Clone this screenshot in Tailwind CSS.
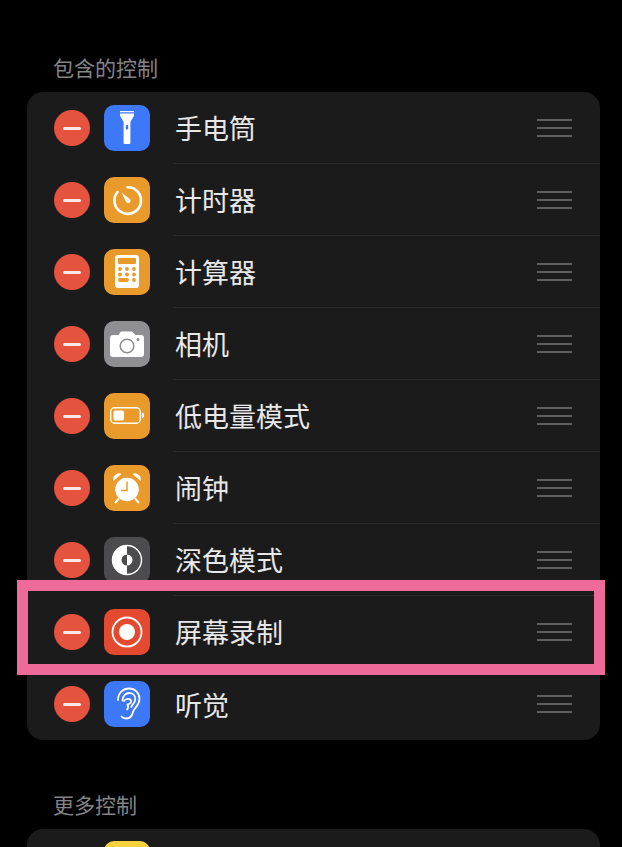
<!DOCTYPE html>
<html lang="zh-CN">
<head>
  <meta charset="UTF-8" />
  <title>控制中心</title>
  <script src="https://cdn.jsdelivr.net/npm/@tailwindcss/browser@4"></script>
</head>
<body class="bg-black h-[847px] overflow-hidden font-['Noto_Sans_CJK_SC',sans-serif]">
<div class="relative h-[847px] overflow-hidden px-[22px] pt-[52px]">

  <!-- 包含的控制 -->
  <h2 class="pl-[31px] h-[40px] text-[21px] leading-[31px] font-normal text-[#848487]">包含的控制</h2>
  <div class="w-[573px] ml-[5px] bg-[#1b1b1c] rounded-[16px] overflow-hidden">

    <div class="flex items-center h-[72px]">
      <div class="ml-[27px] w-[36px] h-[36px] rounded-full bg-[#e5533f] flex items-center justify-center shrink-0"><div class="w-[18px] h-[3px] rounded-full bg-[#fbe9e5]"></div></div>
      <div class="ml-[14px] w-[46px] h-[46px] rounded-[10px] bg-[#3d78f6] shrink-0">
        <svg viewBox="0 0 46 46" class="w-[46px] h-[46px]"><path d="M16 6h14v1.200H16z" fill="#fff"/><path d="M16 8.400h14v2.400l-3.600 6.200V38a1 1 0 0 1-1 1h-4.800a1 1 0 0 1-1-1V17l-3.600-6.200z" fill="#fff"/><rect x="21.800" y="20" width="2.400" height="4.500" rx="1" fill="#3d78f6"/></svg>
      </div>
      <div class="ml-[24px] pl-px flex-1 h-full flex items-center justify-between pr-[28px] border-b border-[#2a2a2b]">
        <span class="text-[27px] leading-none text-[#e8e8e8]">手电筒</span>
        <div class="flex flex-col gap-[6px]"><div class="w-[35px] h-[2px] bg-[#5f5f61]"></div><div class="w-[35px] h-[2px] bg-[#5f5f61]"></div><div class="w-[35px] h-[2px] bg-[#5f5f61]"></div></div>
      </div>
    </div>

    <div class="flex items-center h-[72px]">
      <div class="ml-[27px] w-[36px] h-[36px] rounded-full bg-[#e5533f] flex items-center justify-center shrink-0"><div class="w-[18px] h-[3px] rounded-full bg-[#fbe9e5]"></div></div>
      <div class="ml-[14px] w-[46px] h-[46px] rounded-[10px] bg-[#e99a2b] shrink-0">
        <svg viewBox="0 0 46 46" class="w-[46px] h-[46px]"><path d="M23.500 10.200A13.300 13.300 0 1 1 13.500 15" fill="none" stroke="#fff" stroke-width="2.600" stroke-linecap="round"/><path d="M17.500 15.500l8 6.200a2.400 2.400 0 1 1-3.400 3.200z" fill="#fff"/></svg>
      </div>
      <div class="ml-[24px] pl-px flex-1 h-full flex items-center justify-between pr-[28px] border-b border-[#2a2a2b]">
        <span class="text-[27px] leading-none text-[#e8e8e8]">计时器</span>
        <div class="flex flex-col gap-[6px]"><div class="w-[35px] h-[2px] bg-[#5f5f61]"></div><div class="w-[35px] h-[2px] bg-[#5f5f61]"></div><div class="w-[35px] h-[2px] bg-[#5f5f61]"></div></div>
      </div>
    </div>

    <div class="flex items-center h-[72px]">
      <div class="ml-[27px] w-[36px] h-[36px] rounded-full bg-[#e5533f] flex items-center justify-center shrink-0"><div class="w-[18px] h-[3px] rounded-full bg-[#fbe9e5]"></div></div>
      <div class="ml-[14px] w-[46px] h-[46px] rounded-[10px] bg-[#e99a2b] shrink-0">
        <svg viewBox="0 0 46 46" class="w-[46px] h-[46px]"><rect x="11" y="6" width="24" height="33" rx="3" fill="#fff"/><rect x="14" y="9" width="18" height="6" rx="1" fill="#e99a2b"/><g fill="#e99a2b"><circle cx="16" cy="20" r="1.900"/><circle cx="23" cy="20" r="1.900"/><circle cx="30" cy="20" r="1.900"/><circle cx="16" cy="25.500" r="1.900"/><circle cx="23" cy="25.500" r="1.900"/><circle cx="30" cy="25.500" r="1.900"/><rect x="14.100" y="29.100" width="10.800" height="3.800" rx="1.900"/><circle cx="30" cy="31" r="1.900"/></g></svg>
      </div>
      <div class="ml-[24px] pl-px flex-1 h-full flex items-center justify-between pr-[28px] border-b border-[#2a2a2b]">
        <span class="text-[27px] leading-none text-[#e8e8e8]">计算器</span>
        <div class="flex flex-col gap-[6px]"><div class="w-[35px] h-[2px] bg-[#5f5f61]"></div><div class="w-[35px] h-[2px] bg-[#5f5f61]"></div><div class="w-[35px] h-[2px] bg-[#5f5f61]"></div></div>
      </div>
    </div>

    <div class="flex items-center h-[72px]">
      <div class="ml-[27px] w-[36px] h-[36px] rounded-full bg-[#e5533f] flex items-center justify-center shrink-0"><div class="w-[18px] h-[3px] rounded-full bg-[#fbe9e5]"></div></div>
      <div class="ml-[14px] w-[46px] h-[46px] rounded-[10px] bg-[#8e8e93] shrink-0">
        <svg viewBox="0 0 46 46" class="w-[46px] h-[46px]"><path d="M9 14h5.500l1.500-2.600a2 2 0 0 1 1.700-1h9.600a2 2 0 0 1 1.700 1L31.500 14H37a3 3 0 0 1 3 3v16a3 3 0 0 1-3 3H9a3 3 0 0 1-3-3V17a3 3 0 0 1 3-3z" fill="#fff"/><circle cx="23" cy="25" r="6.800" fill="none" stroke="#8e8e93" stroke-width="1.500"/><circle cx="34" cy="18.500" r="1.500" fill="#8e8e93"/></svg>
      </div>
      <div class="ml-[24px] pl-px flex-1 h-full flex items-center justify-between pr-[28px] border-b border-[#2a2a2b]">
        <span class="text-[27px] leading-none text-[#e8e8e8]">相机</span>
        <div class="flex flex-col gap-[6px]"><div class="w-[35px] h-[2px] bg-[#5f5f61]"></div><div class="w-[35px] h-[2px] bg-[#5f5f61]"></div><div class="w-[35px] h-[2px] bg-[#5f5f61]"></div></div>
      </div>
    </div>

    <div class="flex items-center h-[72px]">
      <div class="ml-[27px] w-[36px] h-[36px] rounded-full bg-[#e5533f] flex items-center justify-center shrink-0"><div class="w-[18px] h-[3px] rounded-full bg-[#fbe9e5]"></div></div>
      <div class="ml-[14px] w-[46px] h-[46px] rounded-[10px] bg-[#e99a2b] shrink-0">
        <svg viewBox="0 0 46 46" class="w-[46px] h-[46px]"><rect x="6.700" y="14.700" width="29.600" height="15.600" rx="4" fill="none" stroke="#fff" stroke-width="1.400"/><rect x="9.500" y="17.500" width="10.500" height="10" rx="1.800" fill="#fff"/><path d="M38 19.500c1.300.4 2 1.500 2 3s-.7 2.600-2 3z" fill="#fff"/></svg>
      </div>
      <div class="ml-[24px] pl-px flex-1 h-full flex items-center justify-between pr-[28px] border-b border-[#2a2a2b]">
        <span class="text-[27px] leading-none text-[#e8e8e8]">低电量模式</span>
        <div class="flex flex-col gap-[6px]"><div class="w-[35px] h-[2px] bg-[#5f5f61]"></div><div class="w-[35px] h-[2px] bg-[#5f5f61]"></div><div class="w-[35px] h-[2px] bg-[#5f5f61]"></div></div>
      </div>
    </div>

    <div class="flex items-center h-[72px]">
      <div class="ml-[27px] w-[36px] h-[36px] rounded-full bg-[#e5533f] flex items-center justify-center shrink-0"><div class="w-[18px] h-[3px] rounded-full bg-[#fbe9e5]"></div></div>
      <div class="ml-[14px] w-[46px] h-[46px] rounded-[10px] bg-[#e99a2b] shrink-0">
        <svg viewBox="0 0 46 46" class="w-[46px] h-[46px]"><circle cx="23" cy="24.500" r="11.800" fill="#fff"/><path d="M9.500 16a5.800 5.800 0 0 1 8-7z" fill="#fff"/><path d="M36.500 16a5.800 5.800 0 0 0-8-7z" fill="#fff"/><path d="M14.500 34l-3 3.500M31.500 34l3 3.500" stroke="#fff" stroke-width="2" stroke-linecap="round"/><path d="M23 16.500v9h-6" fill="none" stroke="#e99a2b" stroke-width="1.500"/></svg>
      </div>
      <div class="ml-[24px] pl-px flex-1 h-full flex items-center justify-between pr-[28px] border-b border-[#2a2a2b]">
        <span class="text-[27px] leading-none text-[#e8e8e8]">闹钟</span>
        <div class="flex flex-col gap-[6px]"><div class="w-[35px] h-[2px] bg-[#5f5f61]"></div><div class="w-[35px] h-[2px] bg-[#5f5f61]"></div><div class="w-[35px] h-[2px] bg-[#5f5f61]"></div></div>
      </div>
    </div>

    <div class="flex items-center h-[72px]">
      <div class="ml-[27px] w-[36px] h-[36px] rounded-full bg-[#e5533f] flex items-center justify-center shrink-0"><div class="w-[18px] h-[3px] rounded-full bg-[#fbe9e5]"></div></div>
      <div class="ml-[14px] w-[46px] h-[46px] rounded-[10px] bg-[#4c4c4e] shrink-0">
        <svg viewBox="0 0 46 46" class="w-[46px] h-[46px]"><circle cx="23" cy="23" r="14.500" fill="none" stroke="#fff" stroke-width="1.400"/><path d="M23 8.500a14.500 14.500 0 0 0 0 29z" fill="#fff"/><path d="M23 17.500a5.500 5.500 0 0 0 0 11z" fill="#4c4c4e"/><path d="M23 17.500a5.500 5.500 0 0 1 0 11z" fill="#fff"/></svg>
      </div>
      <div class="ml-[24px] pl-px flex-1 h-full flex items-center justify-between pr-[28px] border-b border-[#2a2a2b]">
        <span class="text-[27px] leading-none text-[#e8e8e8]">深色模式</span>
        <div class="flex flex-col gap-[6px]"><div class="w-[35px] h-[2px] bg-[#5f5f61]"></div><div class="w-[35px] h-[2px] bg-[#5f5f61]"></div><div class="w-[35px] h-[2px] bg-[#5f5f61]"></div></div>
      </div>
    </div>

    <div class="flex items-center h-[72px]">
      <div class="ml-[27px] w-[36px] h-[36px] rounded-full bg-[#e5533f] flex items-center justify-center shrink-0"><div class="w-[18px] h-[3px] rounded-full bg-[#fbe9e5]"></div></div>
      <div class="ml-[14px] w-[46px] h-[46px] rounded-[10px] bg-[#e5492f] shrink-0">
        <svg viewBox="0 0 46 46" class="w-[46px] h-[46px]"><circle cx="23" cy="23" r="14.500" fill="none" stroke="#fff" stroke-width="1.800"/><circle cx="23" cy="23" r="8" fill="#fff"/></svg>
      </div>
      <div class="ml-[24px] pl-px flex-1 h-full flex items-center justify-between pr-[28px] border-b border-[#2a2a2b]">
        <span class="text-[27px] leading-none text-[#e8e8e8]">屏幕录制</span>
        <div class="flex flex-col gap-[6px]"><div class="w-[35px] h-[2px] bg-[#5f5f61]"></div><div class="w-[35px] h-[2px] bg-[#5f5f61]"></div><div class="w-[35px] h-[2px] bg-[#5f5f61]"></div></div>
      </div>
    </div>

    <div class="flex items-center h-[72px]">
      <div class="ml-[27px] w-[36px] h-[36px] rounded-full bg-[#e5533f] flex items-center justify-center shrink-0"><div class="w-[18px] h-[3px] rounded-full bg-[#fbe9e5]"></div></div>
      <div class="ml-[14px] w-[46px] h-[46px] rounded-[10px] bg-[#3d78f6] shrink-0">
        <svg viewBox="0 0 46 46" class="w-[46px] h-[46px]"><g fill="none" stroke="#fff" stroke-width="1.800" stroke-linecap="round"><path d="M14 19C14 12 19 7.500 25 7.500c6.500 0 10.500 5 10.500 10.500 0 7-5.500 8.500-6.500 13-.8 4-3.500 6.500-7 6.500-2 0-3.500-.8-4.500-2"/><path d="M18.500 19.500c0-4.500 3-7.500 6.800-7.500 4 0 6 3 6 6 0 4-3 5-4 8"/><path d="M20 20c1.500-2.500 6.500-3 7 0 .3 2-1.500 3-3.500 3.500M23.500 23.500c.8 1.500.8 3.500-.3 5"/></g></svg>
      </div>
      <div class="ml-[24px] pl-px flex-1 h-full flex items-center justify-between pr-[28px]">
        <span class="text-[27px] leading-none text-[#e8e8e8]">听觉</span>
        <div class="flex flex-col gap-[6px]"><div class="w-[35px] h-[2px] bg-[#5f5f61]"></div><div class="w-[35px] h-[2px] bg-[#5f5f61]"></div><div class="w-[35px] h-[2px] bg-[#5f5f61]"></div></div>
      </div>
    </div>
  </div>

  <!-- 更多控制 -->
  <h2 class="mt-[49px] pl-[31px] h-[40px] text-[21px] leading-[31px] font-normal text-[#848487]">更多控制</h2>
  <div class="w-[573px] ml-[5px] h-[100px] bg-[#1b1b1c] rounded-[16px] pt-[12px]">
    <div class="ml-[77px] w-[46px] h-[46px] rounded-[10px] bg-[#f8d23a]"></div>
  </div>

  <!-- 高亮框 -->
  <div class="absolute left-[17px] top-[580px] w-[588px] h-[95px] border-[11.500px] border-[#ee6a98]"></div>
</div>
</body>
</html>
